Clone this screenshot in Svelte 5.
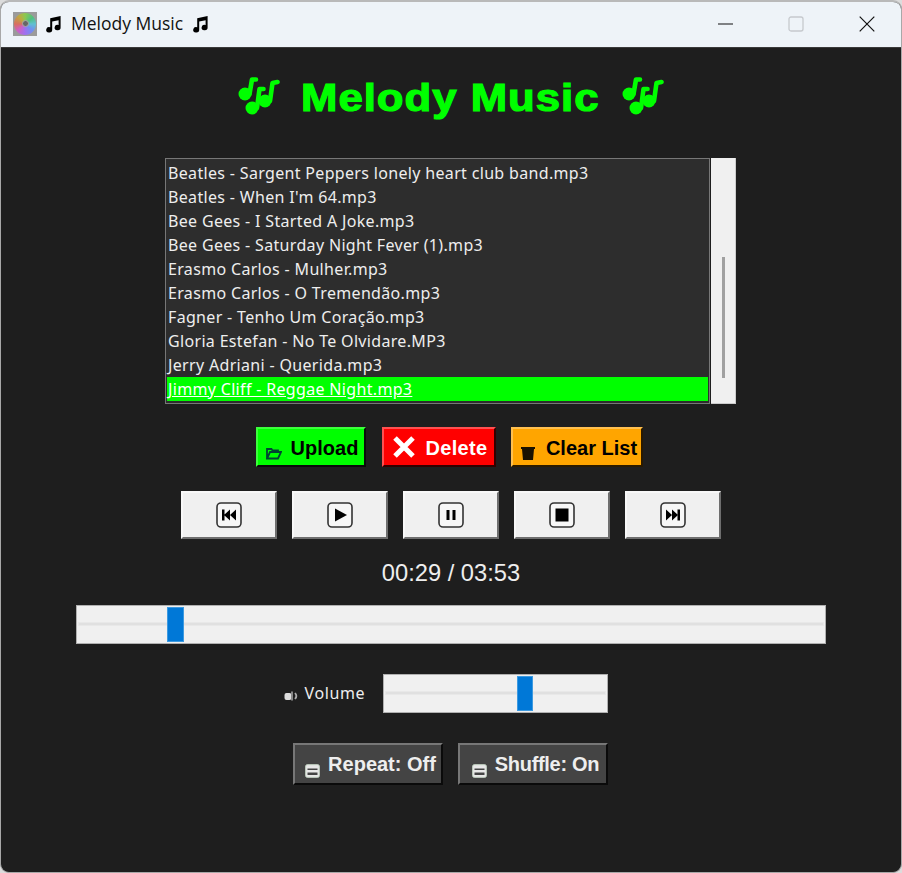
<script>
  const songs = [
    'Beatles - Sargent Peppers lonely heart club band.mp3',
    "Beatles - When I'm 64.mp3",
    'Bee Gees - I Started A Joke.mp3',
    'Bee Gees - Saturday Night Fever (1).mp3',
    'Erasmo Carlos - Mulher.mp3',
    'Erasmo Carlos - O Tremendão.mp3',
    'Fagner - Tenho Um Coração.mp3',
    'Gloria Estefan - No Te Olvidare.MP3',
    'Jerry Adriani - Querida.mp3',
    'Jimmy Cliff - Reggae Night.mp3'
  ];
</script>

{#snippet note()}
  <svg class="tnote" viewBox="0 0 18 18" aria-hidden="true">
    <path d="M5.2 3.2 15.6 1v11.6a3 2.7 0 1 1-2-2.5V5.2L7.2 6.500v8.2a3 2.7 0 1 1-2-2.5z" fill="#000"/>
  </svg>
{/snippet}

{#snippet notes()}
  <svg class="gnotes" viewBox="0 0 42 40" aria-hidden="true">
    <g fill="none" stroke="#00ff00" stroke-width="4.600" stroke-linecap="round" stroke-linejoin="round">
      <path d="M11.500 18 14 3.500H18"/>
      <path d="M19 32 21.500 13H25.500"/>
      <path d="M32 25 34.500 7 39.500 6"/>
    </g>
    <g fill="#00ff00">
      <circle cx="7" cy="18" r="6.500"/>
      <circle cx="14" cy="32" r="6.500"/>
      <circle cx="27" cy="25" r="6.500"/>
    </g>
  </svg>
{/snippet}

{#snippet toggleIcon()}
  <svg class="ticon" viewBox="0 0 15 14" aria-hidden="true">
    <rect x="0.700" y="0.700" width="13.600" height="12.600" rx="1.500" fill="#e8e8e8" stroke="#c8d8c8"/>
    <path d="M2.500 4.500h10v1.500h-10zM2.500 8.500h10v2.500h-10z" fill="#444"/>
  </svg>
{/snippet}

<div class="window">
  <header class="titlebar">
    <div class="cd-frame"><div class="cd"><div class="hole"></div></div></div>
    {@render note()}
    <span class="wintitle">Melody Music</span>
    {@render note()}
    <div class="controls">
      <svg viewBox="0 0 16 16" class="ctl min"><path d="M0 8h15" stroke="#111" stroke-width="1.200"/></svg>
      <svg viewBox="0 0 16 16" class="ctl max"><rect x="1" y="1" width="14" height="14" rx="2" fill="none" stroke="#c6c9cd" stroke-width="1.300"/></svg>
      <svg viewBox="0 0 16 16" class="ctl close"><path d="M.7.7l14.600 14.600M15.300.7.7 15.300" stroke="#111" stroke-width="1.200"/></svg>
    </div>
  </header>

  <main class="body">
    <h1 class="heading">
      {@render notes()}
      <span class="htext">Melody Music</span>
      {@render notes()}
    </h1>

    <div class="listwrap">
      <ul class="list">
        {#each songs as s, i}
          <li class:sel={i === songs.length - 1}>{s}</li>
        {/each}
      </ul>
      <div class="scroll"><div class="sthumb"></div></div>
    </div>

    <div class="row actions">
      <button class="raised upload">
        <svg class="aicon small" viewBox="0 0 16 14"><path d="M1 12.500V3h4.500l1 1.500H12V6M1 12.500h11L15 6H4z" fill="none" stroke="#043" stroke-width="1.800"/></svg>
        <span>Upload</span>
      </button>
      <button class="raised del">
        <svg class="aicon x" viewBox="0 0 22 22"><path d="M2 2l18 18M20 2 2 20" stroke="#fff" stroke-width="5"/></svg>
        <span>Delete</span>
      </button>
      <button class="raised clear">
        <svg class="aicon small" viewBox="0 0 14 14"><path d="M0 1h14v2h-1L12 14H2L1 3H0z" fill="#1a1200"/></svg>
        <span>Clear List</span>
      </button>
    </div>

    <div class="row transport">
      <button class="tbtn"><svg viewBox="0 0 26 26"><rect x="1" y="1" width="24" height="24" rx="4" fill="#f7f7f7" stroke="#333" stroke-width="1.600"/><path d="M6 7.500h2.500v11H6zM14 7.500v11l-6-5.500zM20 7.500v11l-6-5.500z" fill="#000"/></svg></button>
      <button class="tbtn"><svg viewBox="0 0 26 26"><rect x="1" y="1" width="24" height="24" rx="4" fill="#f7f7f7" stroke="#333" stroke-width="1.600"/><path d="M8 6.500v13l12-6.500z" fill="#000"/></svg></button>
      <button class="tbtn"><svg viewBox="0 0 26 26"><rect x="1" y="1" width="24" height="24" rx="4" fill="#f7f7f7" stroke="#333" stroke-width="1.600"/><path d="M8.500 8h3v10h-3zM14.500 8h3v10h-3z" fill="#000"/></svg></button>
      <button class="tbtn"><svg viewBox="0 0 26 26"><rect x="1" y="1" width="24" height="24" rx="4" fill="#f7f7f7" stroke="#333" stroke-width="1.600"/><rect x="6.500" y="6.500" width="13" height="13" fill="#000"/></svg></button>
      <button class="tbtn"><svg viewBox="0 0 26 26"><rect x="1" y="1" width="24" height="24" rx="4" fill="#f7f7f7" stroke="#333" stroke-width="1.600"/><path d="M6 7.500v11l6-5.500zM12 7.500v11l6-5.500zM17.500 7.500h2.500v11h-2.500z" fill="#000"/></svg></button>
    </div>

    <div class="time">00:29 / 03:53</div>

    <div class="slider seek"><div class="groove"></div><div class="thumb" style="left: 90px"></div></div>

    <div class="row volume">
      <svg class="speaker" viewBox="0 0 15 12"><rect x="0.500" y="3" width="7" height="7" rx="2" fill="#ddd"/><path d="M8 1.500v9" stroke="#888" stroke-width="2"/><path d="M11 3c1.800 2 1.800 4 0 6" fill="none" stroke="#aaa" stroke-width="1.800"/></svg>
      <span class="vlabel">Volume</span>
      <div class="slider vol"><div class="groove"></div><div class="thumb vthumb" style="left: 133px"></div></div>
    </div>

    <div class="row toggles">
      <button class="raised dark">{@render toggleIcon()} <span>Repeat: Off</span></button>
      <button class="raised dark">{@render toggleIcon()} <span class="shuffle">Shuffle: On</span></button>
    </div>
  </main>
</div>

<style>
  :global(body) {
    margin: 0;
    background: #dcdcdc;
  }
  .window {
    width: 902px;
    height: 873px;
    box-sizing: border-box;
    border-radius: 9px;
    overflow: hidden;
    display: flex;
    flex-direction: column;
    border: 1px solid #a8a8a8;
    border-top: 2px solid #b9b9b9;
    background: #1e1e1e;
  }
  .titlebar {
    height: 46px;
    flex: none;
    background: #eef3f8;
    display: flex;
    align-items: center;
    padding: 0 0 2px 12px;
    border-bottom: 1px solid #3a3a3a;
    box-sizing: border-box;
  }
  .cd-frame {
    width: 24px;
    height: 24px;
    box-sizing: border-box;
    background: #9b9b9b;
    padding: 1px;
    display: flex;
    margin-right: 8px;
  }
  .cd {
    flex: 1;
    border-radius: 50%;
    background: conic-gradient(#8cc850 0deg, #50c080 50deg, #60c0d0 90deg, #7090f0 130deg, #a070f0 180deg, #d060c0 230deg, #d87060 270deg, #c0a840 320deg, #8cc850 360deg);
    display: flex;
    align-items: center;
    justify-content: center;
  }
  .hole {
    width: 7px;
    height: 7px;
    border-radius: 50%;
    background: #666;
    border: 1px solid #aaa;
    box-sizing: border-box;
  }
  .tnote {
    width: 18px;
    height: 18px;
    flex: none;
  }
  .wintitle {
    font: 17.500px/1 "Open Sans", sans-serif;
    color: #111;
    margin: 0 9px 0 8px;
  }
  .controls {
    margin-left: auto;
    display: flex;
    align-items: center;
  }
  .ctl {
    width: 16px;
    height: 16px;
    display: block;
  }
  .min { margin-right: 54px; }
  .max { margin-right: 55px; }
  .close { margin-right: 26px; }
  .body {
    flex: 1;
    display: flex;
    flex-direction: column;
    align-items: center;
  }
  .heading {
    margin: 24px 0 0 -1px;
    height: 50px;
    display: flex;
    align-items: center;
    gap: 21px;
    font: 700 39px/1 "Liberation Sans", Arial, sans-serif;
    color: #00ff00;
    -webkit-text-stroke: 1.200px #00ff00;
  }
  .htext {
    display: block;
    width: 300px;
    white-space: nowrap;
    letter-spacing: 0.900px;
    transform: scaleX(1.120);
    transform-origin: left center;
  }
  .gnotes {
    width: 42px;
    height: 40px;
    flex: none;
    margin-top: -2px;
  }
  .listwrap {
    margin-top: 36px;
    display: flex;
    gap: 1px;
    height: 246px;
    margin-left: -1px;
  }
  .list {
    margin: 0;
    padding: 2px 1px 0;
    list-style: none;
    width: 545px;
    box-sizing: border-box;
    background: #2d2d2d;
    border: 1px solid #777;
    font: 16px/24px "Noto Sans", sans-serif;
    letter-spacing: 0.330px;
    color: #eee;
  }
  .list li {
    height: 24px;
    padding-left: 1px;
    white-space: nowrap;
  }
  .list li.sel {
    background: #00ff00;
    color: #fff;
    text-decoration: underline;
  }
  .scroll {
    width: 25px;
    background: #f0f0f0;
    box-sizing: border-box;
    border-right: 1px solid #ccc;
    border-bottom: 1px solid #ccc;
    padding: 99px 0 0 11px;
  }
  .sthumb {
    width: 3px;
    height: 121px;
    background: #a0a0a0;
  }
  .row {
    display: flex;
    align-items: center;
  }
  .raised {
    font: 700 20px/1 "Liberation Sans", Arial, sans-serif;
    border-style: solid;
    border-width: 2px;
    padding: 2px 0 0;
    display: flex;
    align-items: center;
    justify-content: center;
    box-sizing: border-box;
  }
  .actions {
    margin-top: 23px;
    margin-left: -3px;
    gap: 16px;
  }
  .actions .raised { height: 40px; }
  .upload {
    width: 110px;
    background: #00ff00;
    color: #000;
    border-color: #3cff3c #0a0a0a #0a0a0a #3cff3c;
    gap: 9px;
    padding-left: 2px;
  }
  .del {
    width: 114px;
    background: #ff0000;
    color: #fff;
    border-color: #ff5050 #300 #300 #ff5050;
    gap: 11px;
    padding-left: 2px;
    margin-right: -1px;
  }
  .del span { letter-spacing: 0.300px; }
  .clear {
    width: 132px;
    background: #ffa500;
    color: #000;
    border-color: #ffc050 #2a1a00 #2a1a00 #ffc050;
    gap: 10px;
    padding-left: 3px;
  }
  .aicon.small {
    width: 16px;
    height: 14px;
    margin-top: 9px;
  }
  .aicon.x {
    width: 22px;
    height: 22px;
    margin-top: -2px;
  }
  .transport {
    margin-top: 24px;
    margin-left: -1px;
    gap: 15px;
  }
  .tbtn {
    width: 96px;
    height: 48px;
    padding: 0;
    background: #f0f0f0;
    border-style: solid;
    border-width: 2px;
    border-color: #f8f8f8 #6e6e6e #6e6e6e #f8f8f8;
    display: flex;
    align-items: center;
    justify-content: center;
    box-sizing: border-box;
  }
  .tbtn svg {
    width: 26px;
    height: 26px;
    display: block;
  }
  .time {
    margin-top: 19px;
    margin-bottom: -1px;
    font: 23.700px/30px "Liberation Sans", Arial, sans-serif;
    color: #eee;
  }
  .slider {
    position: relative;
    height: 39px;
    background: #f0f0f0;
    box-sizing: border-box;
    border: 1px solid #b0b0b0;
  }
  .seek {
    width: 750px;
    margin-top: 18px;
  }
  .vol { width: 225px; }
  .groove {
    position: absolute;
    left: 1px;
    right: 1px;
    top: 16px;
    height: 4px;
    background: #e0e0e0;
    border: 1px solid #e8e8e8;
    box-sizing: border-box;
  }
  .thumb {
    position: absolute;
    top: 1px;
    width: 17px;
    height: 35px;
    background: #0078d7;
    border: 1px solid #3d9ae0;
    box-sizing: border-box;
  }
  .vthumb { width: 16px; }
  .volume {
    margin-top: 30px;
    margin-left: -11px;
  }
  .speaker {
    width: 15px;
    height: 12px;
    margin-top: 4px;
    margin-right: 5px;
  }
  .vlabel {
    font: 16px/1 "Noto Sans", sans-serif;
    letter-spacing: 0.600px;
    color: #eee;
    width: 78px;
    margin: -2px 0 0 1px;
  }
  .toggles {
    margin-top: 30px;
    margin-left: -2px;
    gap: 15px;
  }
  .dark {
    width: 150px;
    height: 42px;
    background: #444;
    color: #eee;
    border-color: #777 #0a0a0a #0a0a0a #777;
    gap: 8px;
    padding: 0 0 0 6px;
  }
  .shuffle { letter-spacing: -0.300px; }
  .ticon {
    width: 15px;
    height: 14px;
    margin-top: 13px;
  }
</style>
